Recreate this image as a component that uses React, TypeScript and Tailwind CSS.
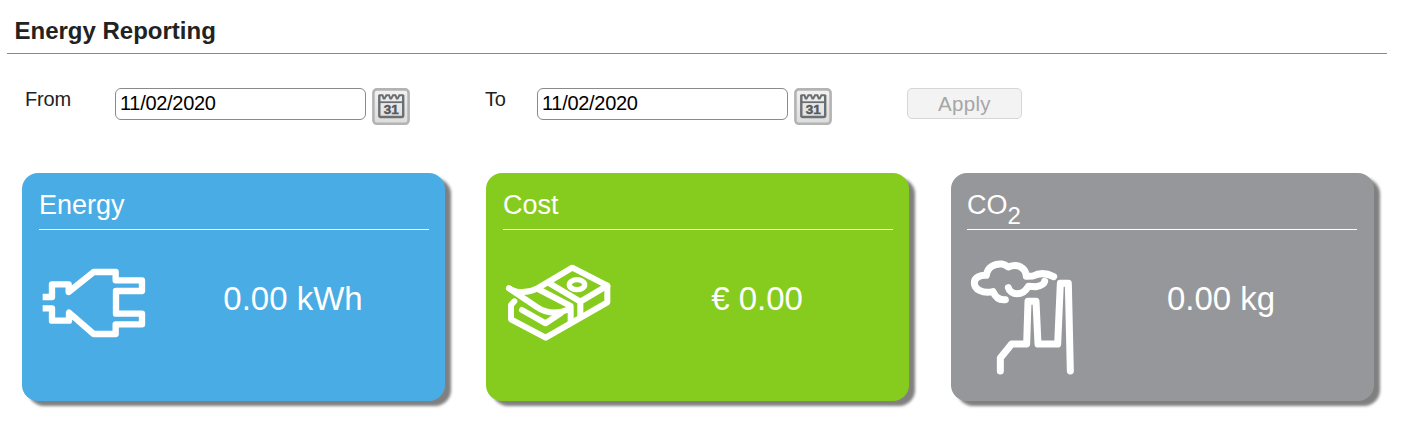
import type { ReactNode } from 'react';

const font = "font-['Liberation_Sans',Arial,sans-serif]";

function CalendarButton() {
  return (
    <button type="button" aria-label="Pick a date" className="ml-[6px] h-[37px] w-[38px] shrink-0">
      <svg viewBox="0 0 38 37" className="block h-full w-full">
        <defs>
          <linearGradient id="face" x1="0" y1="0" x2="0" y2="1">
            <stop offset="0" stopColor="#f2f2f2" />
            <stop offset="1" stopColor="#dcdcdc" />
          </linearGradient>
        </defs>
        <rect x="1.4" y="1.4" width="35.2" height="34.4" rx="3.5" fill="url(#face)" stroke="#b3b3b3" strokeWidth="2.6" />
        <path d="M7.3 7V27.6Q7.3 29 8.7 29H29.8Q31.2 29 31.2 27.6V7" fill="none" stroke="#6b6f71" strokeWidth="2.4" />
        <path d="M7 14.2H31" stroke="#6b6f71" strokeWidth="1.8" />
        <path d="M6.8 7.2H10.5L11.6 10.4H12.6L14.4 7.2H17L18.3 10.4H19.3L21 7.2H23.4L24.7 10.4H25.7L27.4 7.2H31.6" fill="none" stroke="#6b6f71" strokeWidth="2" />
        <text x="19.3" y="26.4" textAnchor="middle" fontFamily="Liberation Sans, Arial, sans-serif" fontSize="12" fontWeight="700" fill="#54585a" stroke="#54585a" strokeWidth="0.4" textLength="15" lengthAdjust="spacingAndGlyphs">31</text>
      </svg>
    </button>
  );
}

function DateField({ label, labelWidth }: { label: string; labelWidth: string }) {
  return (
    <div className="flex items-start">
      <label className={`${labelWidth} text-[20px] leading-[23px] tracking-[-0.2px] text-[#222]`}>{label}</label>
      <input
        type="text"
        defaultValue="11/02/2020"
        className="h-[32px] w-[251px] rounded-[6px] border border-[#8a8a8a] bg-white pb-[2px] pl-[4px] text-[20px] leading-[24px] tracking-[-0.3px] text-black outline-none"
      />
      <CalendarButton />
    </div>
  );
}

function Card({ title, value, color, icon }: { title: ReactNode; value: string; color: string; icon: ReactNode }) {
  return (
    <section className={`${color} h-[228px] w-[423px] shrink-0 rounded-[16px] text-white shadow-[6px_5px_3px_#808080]`}>
      <h2 className="h-[57px] w-[390px] border-b border-white pt-[16px] text-[27px] leading-[32px]">{title}</h2>
      <div className="flex">
        <div className="w-[110px] shrink-0 pt-[26px]">{icon}</div>
        <div className="w-[288px] shrink-0 pt-[49px] text-center text-[33px] leading-[40px]">{value}</div>
      </div>
    </section>
  );
}

const iconProps = {
  className: 'block h-[120px] w-[110px]',
  fill: 'none',
  stroke: 'currentColor',
} as const;

function PlugIcon() {
  return (
    <svg viewBox="57 18 330 360" {...iconProps} strokeWidth="19" strokeLinejoin="round">
      <path d="M68 141H96V103H146V126L221 66H287V91H366V123H288V191H366V223H287V252H221L147 188V212H96V175H68" />
    </svg>
  );
}

function MoneyIcon() {
  return (
    <svg viewBox="39 18 330 360" {...iconProps} strokeWidth="18" strokeLinecap="round" strokeLinejoin="round">
      <path d="M57 115C77 129 112 131 142 115L247 53L352 107V157L167 263L63 208V165L73 154" />
      <path d="M57 115L139 170C164 187 197 194 231 180" />
      <path d="M96 180L167 220L213 189" />
      <path d="M144 117L242 168V215" />
      <path d="M175 98L271 155L352 107M271 155V199" />
      <ellipse cx="261" cy="104" rx="23" ry="15" strokeWidth="16" />
    </svg>
  );
}

function FactoryIcon() {
  return (
    <svg viewBox="51 18 330 360" {...iconProps} strokeWidth="21" strokeLinecap="round" strokeLinejoin="round">
      <path d="M151 363V324L185 282H230L234 154H258L264 282H323L331 100H355L361 363" />
      <path d="M166 149C148 151 136 142 129 125C99 132 73 119 73 99C73 82 91 75 109 76C112 52 133 40 156 42C165 43 170 47 175 51C202 39 227 52 229 79L249 78C266 69 290 69 311 80" />
      <path d="M175 113C181 136 218 140 235 109L257 110C271 108 282 104 284 94" />
    </svg>
  );
}

export default function App() {
  return (
    <main className={`${font} h-[432px] overflow-hidden bg-white`}>
      <header className="ml-[7px] h-[54px] w-[1380px] border-b border-[#8a8a8a] pl-[7.5px] pt-[17px]">
        <h1 className="text-[24px] font-bold leading-[28px] text-[#222]">Energy Reporting</h1>
      </header>

      <form className="flex items-start pl-[25px] pt-[34px]" onSubmit={e => e.preventDefault()}>
        <DateField label="From" labelWidth="w-[90px]" />
        <div className="ml-[75px]">
          <DateField label="To" labelWidth="w-[52px]" />
        </div>
        <button
          type="submit"
          disabled
          className="ml-[75px] h-[31px] w-[115px] rounded-[5px] border border-[#d6d6d6] bg-[#f3f3f3] text-[20.5px] leading-[28px] tracking-[0.3px] text-[#a6a6a6]"
        >
          Apply
        </button>
      </form>

      <div className="flex pl-[22px] pt-[48px]">
        <Card title="Energy" value="0.00 kWh" color="bg-[#4aace4] pl-[17px]" icon={<PlugIcon />} />
        <div className="ml-[41px] mr-[42px]">
          <Card title="Cost" value="€ 0.00" color="bg-[#86cc1e] pl-[17px]" icon={<MoneyIcon />} />
        </div>
        <Card
          title={<>CO<sub className="bottom-[-0.4em] text-[24px]">2</sub></>}
          value="0.00 kg"
          color="bg-[#96979a] pl-[16px]"
          icon={<FactoryIcon />}
        />
      </div>
    </main>
  );
}
